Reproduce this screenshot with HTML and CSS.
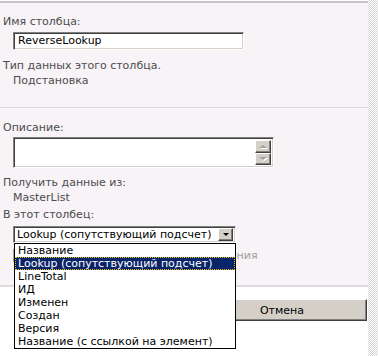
FILE: index.html
```html
<!DOCTYPE html>
<html lang="ru">
<head>
    <meta charset="UTF-8">
    <title>Столбец подстановки</title>
    <link rel="stylesheet" href="styles.css">
</head>
<body>
    <div class="page">
        <div class="panel">
            <!-- Имя и тип -->
            <div class="section first">
                <div class="label">Имя столбца:</div>
                <div class="input">ReverseLookup</div>
                <div class="label gap-type">Тип данных этого столбца.</div>
                <div class="value">Подстановка</div>
            </div>
            <div class="divider"></div>

            <!-- Дополнительные параметры -->
            <div class="section second">
                <div class="label">Описание:</div>
                <div class="textarea">
                    <div class="scroll">
                        <span class="scroll-btn"><span class="tri up"></span></span>
                        <span class="scroll-btn"><span class="tri down"></span></span>
                    </div>
                </div>
                <div class="label gap-source">Получить данные из:</div>
                <div class="value">MasterList</div>
                <div class="label gap-column">В этот столбец:</div>
                <div class="select-wrap">
                    <div class="select">
                        <span class="select-text">Lookup (сопутствующий подсчет)</span>
                        <span class="select-btn"><span class="tri down dark"></span></span>
                    </div>
                    <ul class="options">
                        <li>Название</li>
                        <li class="selected">Lookup (сопутствующий подсчет)</li>
                        <li>LineTotal</li>
                        <li>ИД</li>
                        <li>Изменен</li>
                        <li>Создан</li>
                        <li>Версия</li>
                        <li>Название (с ссылкой на элемент)</li>
                    </ul>
                </div>
                <div class="check-row">
                    <span class="checkbox"></span>
                    <span class="disabled">Разрешить множественные значения</span>
                </div>
            </div>
        </div>

        <!-- Кнопки -->
        <div class="footer">
            <button class="btn">Отмена</button>
        </div>
    </div>
    <div class="strip"></div>
</body>
</html>
```

FILE: styles.css
```css
* {
    margin: 0;
    padding: 0;
    box-sizing: border-box;
}

body {
    display: flex;
    width: 378px;
    height: 356px;
    overflow: hidden;
    background: #fff;
    font-family: 'DejaVu Sans', Verdana, sans-serif;
    font-size: 11px;
    color: #4c4c4c;
}

.page {
    width: 368px;
    padding-top: 1px;
}

/* Transparent checker strip on the right */
.strip {
    width: 10px;
    background: repeating-conic-gradient(#d6d6d6 0 25%, #fff 0 50%) 0 0 / 2px 2px;
}

.panel {
    background: #f7f3f7;
    border-top: 2px solid #c6c3c6;
    border-bottom: 2px solid #dedbde;
    height: 286px;
}

.section {
    padding-left: 3px;
}

.section.first {
    padding-top: 11px;
}

.section.second {
    padding-top: 12px;
}

.label,
.value {
    line-height: 15px;
    white-space: nowrap;
}

.value {
    margin-left: 10px;
}

.gap-type {
    margin-top: 8px;
}

.gap-source {
    margin-top: 7px;
}

.gap-column {
    margin-top: 2px;
}

.divider {
    height: 1px;
    margin-top: 19px;
    background: #dcd8dc;
}

/* Inset fields, classic look */
.input,
.textarea,
.select {
    margin-left: 10px;
    background: #fff;
    border-top: 1px solid #808080;
    border-left: 1px solid #808080;
    border-right: 1px solid #fff;
    border-bottom: 1px solid #fff;
    box-shadow: inset 1px 1px 0 #404040, inset -1px -1px 0 #d4d0c8;
}

.input {
    width: 231px;
    height: 18px;
    margin-top: 3px;
    padding: 1px 0 0 4px;
    line-height: 14px;
    color: #000;
}

.textarea {
    width: 261px;
    height: 31px;
    margin-top: 2px;
    display: flex;
    justify-content: flex-end;
    padding: 2px;
}

.scroll {
    display: flex;
    flex-direction: column;
    width: 16px;
}

.scroll-btn,
.select-btn {
    display: flex;
    align-items: center;
    justify-content: center;
    background: #d4d0c8;
    border-top: 1px solid #fff;
    border-left: 1px solid #fff;
    border-right: 1px solid #404040;
    border-bottom: 1px solid #404040;
    box-shadow: inset -1px -1px 0 #808080;
}

.scroll-btn {
    height: 13px;
}

.tri {
    width: 0;
    height: 0;
    border-left: 4px solid transparent;
    border-right: 4px solid transparent;
}

.tri.up {
    border-bottom: 3px solid #a0a0a0;
    filter: drop-shadow(1px 1px 0 #fff);
}

.tri.down {
    border-top: 3px solid #a0a0a0;
    filter: drop-shadow(1px 1px 0 #fff);
}

.tri.down.dark {
    border-left-width: 3px;
    border-right-width: 3px;
    border-top-color: #000;
    filter: none;
}

/* Select with open list */
.select-wrap {
    position: relative;
    margin-top: 4px;
}

.select {
    width: 223px;
    height: 17px;
    display: flex;
    align-items: center;
    justify-content: space-between;
    padding: 0 2px 0 3px;
    color: #000;
}

.select-text {
    white-space: nowrap;
    overflow: hidden;
}

.select-btn {
    width: 15px;
    height: 13px;
    flex: none;
}

.options {
    position: absolute;
    top: 17px;
    left: 11px;
    width: 222px;
    list-style: none;
    background: #fff;
    border: 1px solid #000;
    color: #000;
    z-index: 10;
}

.options li {
    height: 13px;
    line-height: 13px;
    padding-left: 3px;
    white-space: nowrap;
    overflow: hidden;
}

.options li.selected {
    background: #0a246a;
    color: #fff;
    outline: 1px dotted #f0c000;
    outline-offset: -1px;
}

.check-row {
    display: flex;
    align-items: center;
    gap: 13px;
    margin-top: 5px;
    margin-left: 10px;
    line-height: 15px;
    white-space: nowrap;
}

.checkbox {
    width: 13px;
    height: 13px;
    border: 1px solid #a0a0a0;
}

.disabled {
    color: #a0a0a0;
}

/* Buttons */
.footer {
    display: flex;
    justify-content: flex-end;
    padding: 12px 1px 0 0;
}

.btn {
    width: 170px;
    height: 22px;
    background: #d4d0c8;
    border-top: 1px solid #fff;
    border-left: 1px solid #fff;
    border-right: 1px solid #404040;
    border-bottom: 1px solid #404040;
    box-shadow: inset -1px -1px 0 #808080;
    font-family: 'DejaVu Sans', Verdana, sans-serif;
    font-size: 11px;
    color: #000;
}
```
